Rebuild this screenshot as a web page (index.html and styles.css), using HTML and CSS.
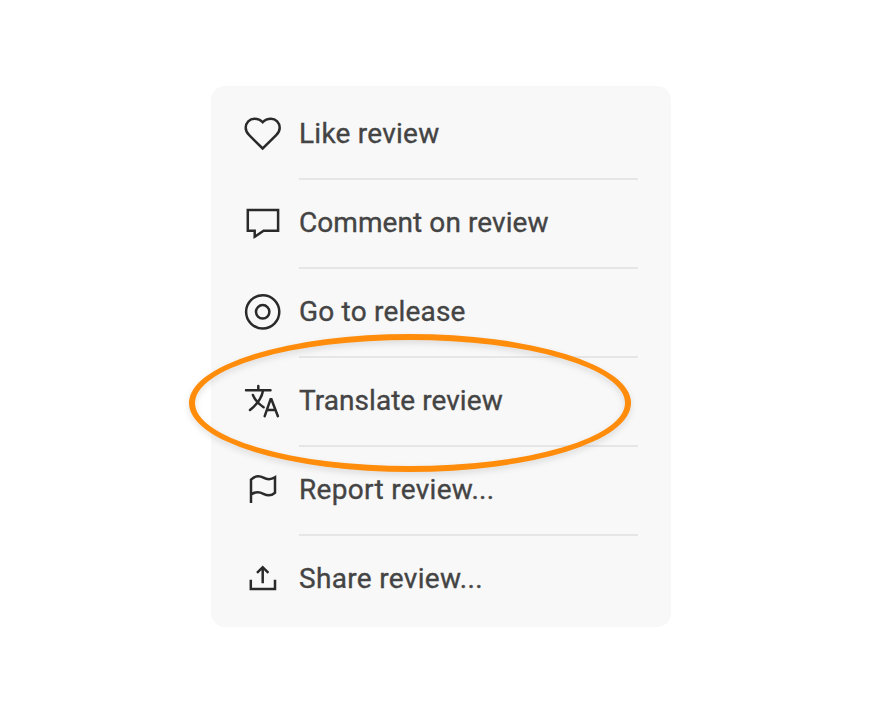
FILE: index.html
```html
<!DOCTYPE html>
<html lang="en">
<head>
  <meta charset="UTF-8" />
  <meta name="viewport" content="width=device-width, initial-scale=1.0"/>
  <title>Review menu</title>
  <link rel="stylesheet" href="styles.css">
</head>
<body>
  <div class="menu">
    <div class="item">
      <svg class="icon" viewBox="0 0 40 41"><path d="M19.7 34.5 L6.2 21.2 C4 19 2.7 16.6 2.7 13.7 C2.7 8.6 6.6 4.7 11.4 4.7 C14.6 4.7 17.6 5.8 19.7 8.2 C21.8 5.8 24.8 4.7 28 4.7 C32.8 4.7 36.7 8.6 36.7 13.7 C36.7 16.6 35.4 19 33.2 21.2 Z"/></svg>
      <span class="label like">Like review</span>
    </div>
    <div class="item">
      <svg class="icon" viewBox="0 0 40 41"><path d="M4.8 6.9 H35.1 V27.7 H20.6 L11.7 33.7 V27.7 H4.8 Z"/></svg>
      <span class="label comment">Comment on review</span>
    </div>
    <div class="item">
      <svg class="icon" viewBox="0 0 40 41"><circle cx="19.7" cy="19.8" r="16.6"/><circle cx="19.7" cy="19.8" r="6.7"/></svg>
      <span class="label release">Go to release</span>
    </div>
    <div class="item">
      <svg class="icon round" viewBox="0 0 40 41"><path d="M3 9.3 H27.5 M15.3 5 V9 M20 9.8 C18.7 17 14.5 23 7 29 M9.9 14 C11.8 18.6 15.2 22.8 20.6 26.3"/><path d="M21.7 35.2 L27.6 18.2 H28.4 L34.9 35.2 M23.9 29 H32.4"/></svg>
      <span class="label translate">Translate review</span>
    </div>
    <div class="item">
      <svg class="icon" viewBox="0 0 40 41"><path d="M8 33 V9.6 C12 5.8 16.3 5.4 20.4 7.7 C24.5 10 27.8 10 32 7.3 V22.8 C28.2 26.2 24.6 26 20.4 23.8 C16.2 21.6 12 21.7 8 24.4"/></svg>
      <span class="label report">Report review...</span>
    </div>
    <div class="item">
      <svg class="icon" viewBox="0 0 40 41"><path d="M7.8 20.7 V30 H32 V20.7 M19.7 24.2 V8.2 M14 13.9 L19.7 8.2 L25.4 13.9"/></svg>
      <span class="label share">Share review...</span>
    </div>
    <div class="highlight"></div>
  </div>
</body>
</html>
```
FILE: styles.css
```css
body {
  margin: 0;
  background: #fff;
  font-family: Roboto, "Liberation Sans", sans-serif;
  color: #444;
}

.menu {
  position: relative;
  box-sizing: border-box;
  width: 460px;
  height: 541px;
  margin: 86px 0 0 211px;
  padding: 5px 33px 4px 32px;
  background: #f8f8f8;
  border-radius: 14px;
}

.item {
  display: flex;
  align-items: center;
  gap: 16px;
  height: 89px;
}

.icon {
  flex: none;
  width: 40px;
  height: 41px;
  margin-bottom: 2px;
  fill: none;
  stroke: #2a2a2a;
  stroke-width: 2.5;
}

.round {
  stroke-linecap: round;
}

.label {
  flex: 1;
  box-sizing: border-box;
  height: 89px;
  line-height: 86px;
  font-size: 28px;
  white-space: nowrap;
  border-bottom: 2px solid #e6e6e6;
  -webkit-text-stroke: 0.35px #444;
}

.like { letter-spacing: 0.25px; }
.comment { letter-spacing: 0.08px; }
.release { letter-spacing: 0.2px; }
.translate { letter-spacing: 0.05px; }
.report { letter-spacing: 0.3px; }
.share { letter-spacing: 0.33px; }

.item:nth-child(6) .label {
  border-bottom-color: transparent;
}

/* ring around the translate row */
.highlight {
  position: absolute;
  left: -22px;
  top: 248px;
  box-sizing: border-box;
  width: 442px;
  height: 138px;
  border: 6px solid #ff8c0a;
  border-radius: 50%;
  filter: drop-shadow(0 3px 3px rgba(0, 0, 0, 0.12));
}
```
